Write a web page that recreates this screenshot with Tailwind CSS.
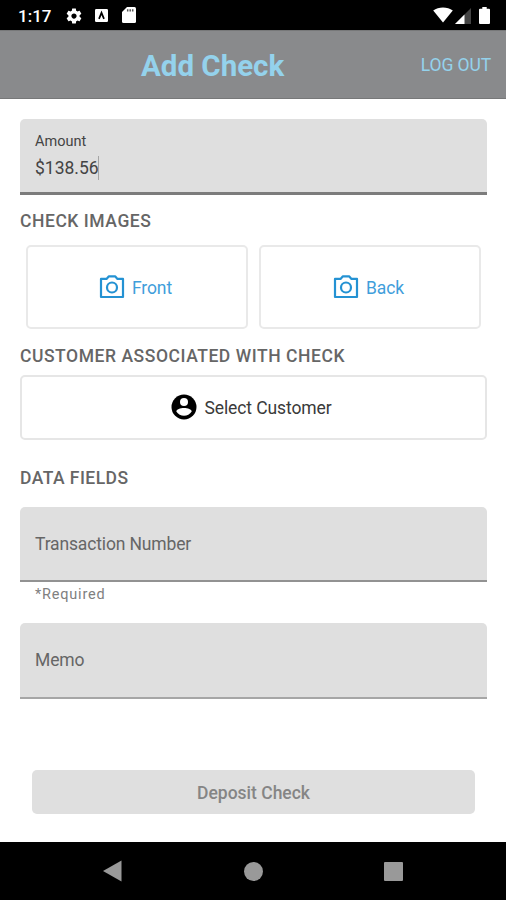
<!DOCTYPE html>
<html lang="en">
<head>
<meta charset="utf-8">
<title>Add Check</title>
<script src="https://cdn.jsdelivr.net/npm/@tailwindcss/browser@4"></script>
</head>
<body class="bg-white">
<div class="flex h-[900px] w-[506px] flex-col overflow-hidden bg-white font-['Roboto',sans-serif] whitespace-nowrap">
  <div class="flex h-[30px] shrink-0 items-center bg-black pr-[16px] pl-[18px] text-white">
    <span class="w-[47px] pt-[2px] text-[17px] leading-5 font-medium">1:17</span>
    <svg class="mt-[1px] size-[18px]" viewBox="0 0 24 24" fill="currentColor"><path d="M19.43 12.98c.04-.32.07-.64.07-.98s-.03-.66-.07-.98l2.110-1.650c.19-.15.24-.42.12-.64l-2-3.460c-.12-.22-.39-.3-.61-.22l-2.490 1c-.52-.4-1.080-.73-1.690-.98l-.38-2.650C14.460 2.180 14.250 2 14 2h-4c-.25 0-.46.18-.49.42l-.38 2.650c-.61.25-1.170.59-1.690.98l-2.490-1c-.23-.09-.49 0-.61.22l-2 3.460c-.13.22-.07.49.12.64l2.110 1.650c-.04.32-.07.65-.07.98s.03.66.07.98l-2.110 1.650c-.19.15-.24.42-.12.64l2 3.460c.12.22.39.3.61.22l2.490-1c.52.4 1.080.73 1.690.98l.38 2.650c.03.24.24.42.49.42h4c.25 0 .46-.18.49-.42l.38-2.650c.61-.25 1.170-.59 1.690-.98l2.490 1c.23.09.49 0 .61-.22l2-3.460c.12-.22.07-.49-.12-.64l-2.110-1.650zM12 15.500c-1.930 0-3.500-1.570-3.500-3.500s1.570-3.500 3.500-3.500 3.500 1.570 3.500 3.500-1.570 3.500-3.500 3.500z"/></svg>
    <svg class="mt-[1px] ml-[12px] h-[13px] w-[13px]" viewBox="0 0 13 13"><rect width="13" height="13" rx="1.200" fill="#fff"/><path d="M4 9.800 6.500 3.800 9 9.800" fill="none" stroke="#000" stroke-width="1.700"/></svg>
    <svg class="ml-[14px] h-[16px] w-[14px]" viewBox="0 0 14 16"><path d="M5 0h7.500Q14 0 14 1.500v13Q14 16 12.500 16h-11Q0 16 0 14.500V5z" fill="#fff"/><path d="M5.700 2.300v2.200M8.200 2.300v2.200M10.700 2.300v2.200" stroke="#555" stroke-width="1.500"/></svg>
    <svg class="ml-auto h-[16px] w-[20px]" viewBox="0 0 20 16"><path d="M10 15.500 0.200 3.600C5.500-.6 14.500-.6 19.800 3.600z" fill="#fff"/></svg>
    <svg class="mt-[1px] ml-[2px] h-[16px] w-[16px]" viewBox="0 0 16 16"><path d="M16 0v16H0z" fill="#444"/><path d="M9.500 6.500V16H0z" fill="#fff"/></svg>
    <svg class="ml-[8px] h-[17px] w-[11px]" viewBox="0 0 11 17"><path d="M3.300 0h4.400v1.700H10q1 0 1 1V16q0 1-1 1H1q-1 0-1-1V2.700q0-1 1-1h2.300z" fill="#fff"/></svg>
  </div>
  <header class="grid h-[69px] shrink-0 grid-cols-[141px_1fr_auto] items-center border-y border-[#777879] bg-[#898a8c] pr-[15px] text-[#94d2ec]">
    <h1 class="col-start-2 pt-[3px] text-[29.500px] leading-9 font-bold">Add Check</h1>
    <span class="text-[17.500px] leading-5 tracking-[-0.100px]">LOG OUT</span>
  </header>
  <main class="flex h-[743px] shrink-0 flex-col px-[20px] pt-[20px]">
    <div class="flex h-[76px] w-[467px] shrink-0 flex-col rounded-t-[5px] border-b-[3px] border-[#7c7c7c] bg-[#dfdfdf] pt-[14px] pl-[15px]">
      <span class="text-[14.500px] leading-[18px] text-[#444]">Amount</span>
      <span class="mt-[5px] flex items-center text-[17.500px] leading-[24px] text-[#444]"><span>$138.56</span><i class="-ml-px h-6 w-px bg-[#a5a5a5]"></i></span>
    </div>
    <h2 class="mt-[15px] h-[22px] text-[17.500px] leading-[22px] font-medium tracking-[0.550px] text-[#666]">CHECK IMAGES</h2>
    <div class="mt-[13px] flex w-[461px] shrink-0 gap-[11px] pl-[6px]">
      <button class="flex h-[84px] w-[222px] items-center justify-center rounded-[5px] border-2 border-[#e9e9e9] pr-[3px] text-[17.500px] tracking-[-0.100px] text-[#3f9edb]">
        <svg class="mr-[7px] h-[24px] w-[26px]" viewBox="0 0 26 24" fill="none" stroke="#2492d3" stroke-width="2.200"><path d="M2 3.900H7.500L9.700 1.400H16.300L18.500 3.900H24V22H2z" stroke-linejoin="round"/><circle cx="13" cy="12.500" r="5"/></svg>
        <span class="pt-[3px]">Front</span>
      </button>
      <button class="flex h-[84px] w-[222px] items-center justify-center rounded-[5px] border-2 border-[#e9e9e9] pr-[3px] text-[17.500px] tracking-[-0.100px] text-[#3f9edb]">
        <svg class="mr-[7px] h-[24px] w-[26px]" viewBox="0 0 26 24" fill="none" stroke="#2492d3" stroke-width="2.200"><path d="M2 3.900H7.500L9.700 1.400H16.300L18.500 3.900H24V22H2z" stroke-linejoin="round"/><circle cx="13" cy="12.500" r="5"/></svg>
        <span class="pt-[3px]">Back</span>
      </button>
    </div>
    <h2 class="mt-[16px] h-[22px] text-[17.500px] leading-[22px] font-medium tracking-[0.550px] text-[#666]">CUSTOMER ASSOCIATED WITH CHECK</h2>
    <button class="mt-[8px] flex h-[65px] w-[467px] shrink-0 items-center justify-center rounded-[5px] border-2 border-[#e6e6e6] pr-[4px] text-[17.500px] tracking-[-0.100px] text-[#3a3a3a]">
      <svg class="mr-[7px] mb-[2px] size-[26px]" viewBox="0 0 26 26"><circle cx="13" cy="13" r="12.500" fill="#000"/><circle cx="13" cy="8" r="4" fill="#fff"/><path d="M5.300 17.500C5.500 12.800 20.500 12.800 20.700 17.500 17.300 23.200 8.700 23.200 5.300 17.500z" fill="#fff"/></svg>
      <span class="pt-[1px]">Select Customer</span>
    </button>
    <h2 class="mt-[27px] h-[22px] text-[17.500px] leading-[22px] font-medium tracking-[0.450px] text-[#666]">DATA FIELDS</h2>
    <div class="mt-[18px] flex h-[75px] w-[467px] shrink-0 items-center rounded-t-[5px] border-b-2 border-[#929292] bg-[#dfdfdf] pt-[2px] pl-[15px] text-[17.500px] tracking-[-0.150px] text-[#666]">Transaction Number</div>
    <p class="mt-[2px] pl-[15px] text-[14.500px] leading-[21px] tracking-[0.800px] text-[#808080]">*Required</p>
    <div class="mt-[18px] flex h-[76px] w-[467px] shrink-0 items-center rounded-t-[5px] border-b-2 border-[#a6a6a6] bg-[#dfdfdf] pl-[15px] text-[17.500px] tracking-[-0.150px] text-[#666]">Memo</div>
    <button class="mt-[71px] ml-[12px] h-[44px] w-[443px] shrink-0 rounded-[5px] bg-[#dfdfdf] pt-[2px] text-[17.500px] font-medium text-[#858585]">Deposit Check</button>
  </main>
  <nav class="flex h-[58px] shrink-0 items-center bg-black pl-[103px]">
    <svg class="h-[22px] w-[19px]" viewBox="0 0 19 22"><path d="M18.500.5v21L0 11z" fill="#999"/></svg>
    <i class="ml-[122px] size-[19px] rounded-full bg-[#999]"></i>
    <i class="ml-[121px] size-[19px] rounded-[1px] bg-[#999]"></i>
  </nav>
</div>
</body>
</html>
